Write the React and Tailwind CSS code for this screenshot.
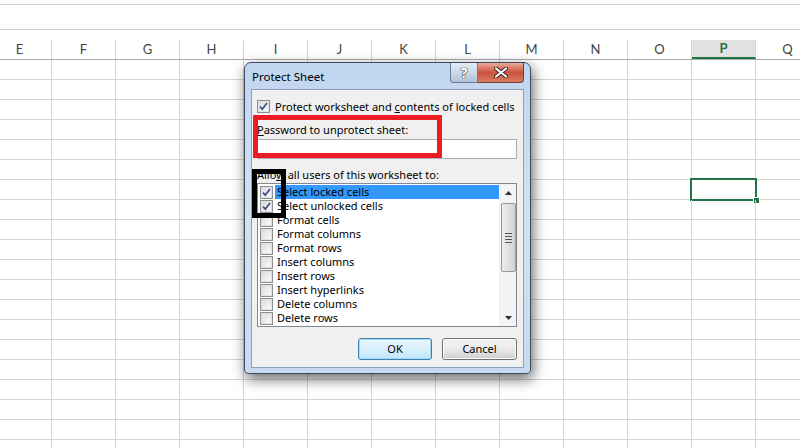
import React from 'react';

const columns = ['E', 'F', 'G', 'H', 'I', 'J', 'K', 'L', 'M', 'N', 'O', 'P', 'Q'];
const rows = Array.from({ length: 20 }, (_, i) => i + 1);

const permissions = [
  { label: 'Select locked cells', checked: true, selected: true },
  { label: 'Select unlocked cells', checked: true },
  { label: 'Format cells' },
  { label: 'Format columns' },
  { label: 'Format rows' },
  { label: 'Insert columns' },
  { label: 'Insert rows' },
  { label: 'Insert hyperlinks' },
  { label: 'Delete columns' },
  { label: 'Delete rows' },
];

function CheckBox({ checked }) {
  return (
    <span className="flex h-[13px] w-[13px] shrink-0 items-center justify-center border border-[#8e8f8f] bg-white">
      <span className="flex h-[11px] w-[11px] items-center justify-center border border-[#e0e0e0] bg-gradient-to-br from-[#dcdcdc] to-[#fbfbfb]">
        {checked && (
          <svg width="9" height="9" viewBox="0 0 9 9">
            <path d="M1 4.6 L3.3 7.2 L8 1" fill="none" stroke="#3c4f8e" strokeWidth="1.8" />
          </svg>
        )}
      </span>
    </span>
  );
}

function Scrollbar() {
  return (
    <div className="flex w-[17px] flex-col border-l border-[#f0f0f0] bg-[#f4f4f4]">
      <div className="flex h-[17px] items-center justify-center">
        <svg width="7" height="4" viewBox="0 0 7 4">
          <path d="M0 4 L3.5 0 L7 4 Z" fill="#303030" />
        </svg>
      </div>
      <div className="ml-[1px] mt-[2px] flex h-[69px] w-[15px] items-center justify-center rounded-[2px] border border-[#979797] bg-gradient-to-r from-[#ededed] via-[#e0e0e0] to-[#d2d2d2]">
        <div className="flex flex-col gap-[2px]">
          <span className="block h-[1px] w-[7px] bg-[#555]" />
          <span className="block h-[1px] w-[7px] bg-[#555]" />
          <span className="block h-[1px] w-[7px] bg-[#555]" />
          <span className="block h-[1px] w-[7px] bg-[#555]" />
        </div>
      </div>
      <div className="flex-1" />
      <div className="flex h-[17px] items-center justify-center">
        <svg width="7" height="4" viewBox="0 0 7 4">
          <path d="M0 0 L3.5 4 L7 0 Z" fill="#303030" />
        </svg>
      </div>
    </div>
  );
}

function ProtectSheetDialog() {
  return (
    <div className="absolute left-[244px] top-[62px] flex h-[312px] w-[287px] flex-col rounded-t-[7px] rounded-b-[4px] border border-[#3d4b5c] bg-gradient-to-b from-[#c0d6ef] via-[#d2e2f4] to-[#c6daf0] px-[6px] pb-[5px] shadow-[2px_5px_14px_rgba(0,0,0,0.6)]">
      <div className="flex h-[26px] shrink-0 justify-between">
        <span className="pl-[1px] pt-[7px] text-[11.5px] leading-[14px] text-black">Protect Sheet</span>
        <div className="flex">
          <button className="flex h-[20px] w-[28px] items-center justify-center rounded-bl-[4px] border border-t-0 border-[#6a7b90] bg-gradient-to-b from-[#e3ecf6] via-[#cbd9e8] to-[#b2c4d8] text-[14px] font-bold leading-none text-white [text-shadow:0_0_1px_#333,0_0_1px_#333,0_0_1px_#333]">
            ?
          </button>
          <button className="flex h-[20px] w-[46px] items-center justify-center rounded-br-[4px] border border-l-0 border-t-0 border-[#7d3a2e] bg-gradient-to-b from-[#e9a99a] via-[#c9533e] to-[#d87c62]">
            <svg width="14" height="11" viewBox="0 0 14 11">
              <path d="M2 1.5 L12 9.5 M12 1.5 L2 9.5" stroke="#3b2320" strokeWidth="4" strokeLinecap="round" />
              <path d="M2 1.5 L12 9.5 M12 1.5 L2 9.5" stroke="#ffffff" strokeWidth="2.2" strokeLinecap="round" />
            </svg>
          </button>
        </div>
      </div>

      <div className="relative flex flex-1 flex-col whitespace-nowrap border border-[#8ba2bd] bg-[#f0f0f0] px-[5px] pt-[10px] text-[11px] leading-[14px] text-black">
        <div className="flex h-[13px] items-center gap-[5px]">
          <CheckBox checked />
          <span>
            Protect worksheet and <span className="underline">c</span>ontents of locked cells
          </span>
        </div>
        <div className="mt-[10px] h-[14px]">
          <span className="underline">P</span>assword to unprotect sheet:
        </div>
        <div className="mt-[2px] h-[20px] w-[260px] border border-[#abadb3] bg-white" />
        <div className="mt-[9px] h-[14px]">
          Allo<span className="underline">w</span> all users of this worksheet to:
        </div>
        <div className="mt-[1px] flex h-[144px] w-[260px] border border-[#828790] bg-white">
          <div className="flex flex-1 flex-col pl-[2px] pt-[1px]">
            {permissions.map((p) => (
              <div key={p.label} className="flex h-[14px] items-center">
                <CheckBox checked={p.checked} />
                <span
                  className={`ml-[2px] flex h-[14px] flex-1 items-center pl-[2px] ${
                    p.selected ? 'bg-[#3399ff]' : ''
                  }`}
                >
                  {p.label}
                </span>
              </div>
            ))}
          </div>
          <Scrollbar />
        </div>
        <div className="mt-[11px] flex w-[260px] justify-end gap-[10px]">
          <button className="h-[22px] w-[74px] rounded-[3px] border border-[#3c7fb1] bg-gradient-to-b from-[#eaf6fd] via-[#d9f0fc] to-[#bee6fd] text-[11px] shadow-[inset_0_0_0_1px_#a7d9f5]">
            OK
          </button>
          <button className="h-[22px] w-[75px] rounded-[3px] border border-[#707070] bg-gradient-to-b from-[#f2f2f2] via-[#ebebeb] to-[#cfcfcf] text-[11px] shadow-[inset_0_0_0_1px_#fcfcfc]">
            Cancel
          </button>
        </div>

        {/* annotation boxes drawn over the dialog */}
        <div className="absolute left-[1px] top-[25px] h-[43px] w-[189px] border-[5px] border-[#ed1c24]" />
        <div className="absolute left-[0px] top-[79px] h-[49px] w-[34px] border-[5px] border-black" />
      </div>
    </div>
  );
}

export default function App() {
  return (
    <div
      className="relative h-[448px] w-[800px] overflow-hidden bg-white"
      style={{ fontFamily: '"Noto Sans", "Open Sans", sans-serif' }}
    >
      <div className="h-[4px]" />
      <div className="h-[25px] border-t border-[#d0d0d0]" />
      <div className="h-[11px] border-t border-[#d0d0d0]" />

      <div className="-ml-[12px] flex h-[20px] border-b border-[#ababab]">
        {columns.map((c) => (
          <div
            key={c}
            className={`flex h-full w-[64px] shrink-0 items-center justify-center border-r border-[#d4d4d4] text-[13px] ${
              c === 'P'
                ? 'border-b-2 border-b-[#217346] bg-[#e1e1e1] font-bold text-[#217346]'
                : 'text-[#444]'
            }`}
            style={{ fontFamily: 'Lato, "Liberation Sans", sans-serif' }}
          >
            {c}
          </div>
        ))}
      </div>

      {rows.map((r) => (
        <div key={r} className="-ml-[12px] flex h-[20px] border-b border-[#d4d4d4]">
          {columns.map((c) => (
            <div key={c} className="relative h-full w-[64px] shrink-0 border-r border-[#d4d4d4]">
              {r === 7 && c === 'P' && (
                <div className="absolute -left-[2px] -top-[2px] h-[23px] w-[67px] border-2 border-[#217346]">
                  <span className="absolute -bottom-[5px] -right-[5px] h-[7px] w-[7px] border border-white bg-[#217346]" />
                </div>
              )}
            </div>
          ))}
        </div>
      ))}

      <ProtectSheetDialog />
    </div>
  );
}
